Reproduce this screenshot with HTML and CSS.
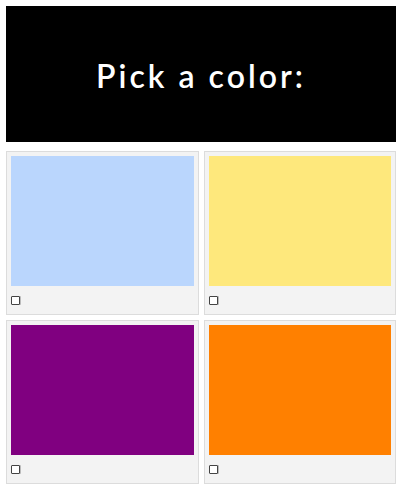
FILE: index.html
```html
<!DOCTYPE html>
<html lang="en">
<head>
  <meta charset="UTF-8">
  <meta name="viewport" content="width=device-width, initial-scale=1.0">
  <title>Pick a color</title>
  <link rel="stylesheet" href="styles.css">
</head>
<body>
  <h1 class="banner">Pick a color:</h1>

  <div class="grid">
    <label class="card">
      <div class="swatch blue"></div>
      <input type="checkbox" class="check">
    </label>
    <label class="card">
      <div class="swatch yellow"></div>
      <input type="checkbox" class="check">
    </label>
    <label class="card">
      <div class="swatch purple"></div>
      <input type="checkbox" class="check">
    </label>
    <label class="card">
      <div class="swatch orange"></div>
      <input type="checkbox" class="check">
    </label>
  </div>
</body>
</html>
```

FILE: styles.css
```css
body {
  margin: 6px 5px 6px 6px;
  font-family: Lato, "Open Sans", sans-serif;
  background: #fff;
}
.banner {
  margin: 0;
  height: 136px;
  background: #000;
  color: #fff;
  display: flex;
  align-items: center;
  justify-content: center;
  font-size: 32px;
  font-weight: 600;
  letter-spacing: 3px;
  padding-top: 2px;
  box-sizing: border-box;
}
.grid {
  margin-top: 9px;
  display: grid;
  grid-template-columns: 1fr 1fr;
  gap: 5px;
}
.card {
  display: flex;
  flex-direction: column;
  align-items: flex-start;
  background: #f3f3f3;
  border: 1px solid #dcdcdc;
  padding: 4px;
}
.swatch {
  align-self: stretch;
  height: 130px;
}
.blue { background: #bad6fd; }
.yellow { background: #fee87c; }
.purple { background: #800080; }
.orange { background: #ff8000; }
.check {
  appearance: none;
  -webkit-appearance: none;
  width: 9px;
  height: 9px;
  margin: 10px 0 5px 0;
  border: 1px solid #444;
  border-radius: 1px;
  background: #fff;
  box-shadow: 1px 0 0 #bbb;
  box-sizing: border-box;
}
.check:checked {
  background: #444;
}
```
